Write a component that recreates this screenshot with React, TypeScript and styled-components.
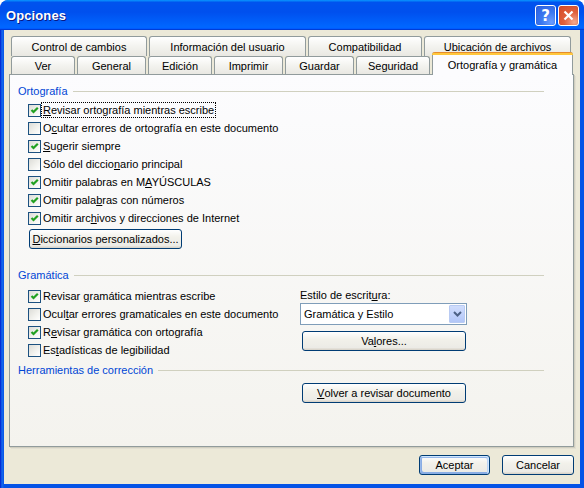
import React from 'react'
import styled, { createGlobalStyle } from 'styled-components'

const GlobalStyle = createGlobalStyle`
  html, body {
    margin: 0;
    padding: 0;
    background: #ffffff;
  }
  body {
    font-family: "Liberation Sans", Arial, sans-serif;
    font-size: 11px;
    color: #000000;
  }
  * {
    box-sizing: border-box;
  }
`

const Key = styled.span`
  text-decoration: underline;
  text-underline-offset: 1px;
`

type CheckItem = {
  label: React.ReactNode
  checked: boolean
  focused?: boolean
}

const topTabs = [
  { label: 'Control de cambios', width: 136 },
  { label: 'Información del usuario', width: 157 },
  { label: 'Compatibilidad', width: 114 },
  { label: 'Ubicación de archivos', width: 147 },
]

const bottomTabs = [
  { label: 'Ver', width: 64 },
  { label: 'General', width: 69 },
  { label: 'Edición', width: 64 },
  { label: 'Imprimir', width: 69 },
  { label: 'Guardar', width: 69 },
  { label: 'Seguridad', width: 74 },
]

function CheckBox({ checked }: { checked: boolean }) {
  return (
    <Box>
      {checked && (
        <svg width="11" height="11" viewBox="0 0 11 11">
          <path d="M2.5 5 L4.5 7 L8.8 2.7" fill="none" stroke="#21A121" strokeWidth="2.2" />
        </svg>
      )}
    </Box>
  )
}

function CheckRows({ items, $flush }: { items: CheckItem[]; $flush?: boolean }) {
  return (
    <CheckList $flush={$flush}>
      {items.map((item, i) => (
        <CheckRow key={i}>
          <CheckBox checked={item.checked} />
          <CheckLabel $focused={item.focused}>{item.label}</CheckLabel>
        </CheckRow>
      ))}
    </CheckList>
  )
}

function App() {
  const spelling: CheckItem[] = [
    { label: <><Key>R</Key>evisar ortografía mientras escribe</>, checked: true, focused: true },
    { label: <>O<Key>c</Key>ultar errores de ortografía en este documento</>, checked: false },
    { label: <><Key>S</Key>ugerir siempre</>, checked: true },
    { label: <>Sólo del diccio<Key>n</Key>ario principal</>, checked: false },
    { label: <>Omitir palabras en M<Key>A</Key>YÚSCULAS</>, checked: true },
    { label: <>Omitir pala<Key>b</Key>ras con números</>, checked: true },
    { label: <>Omitir arc<Key>h</Key>ivos y direcciones de Internet</>, checked: true },
  ]

  const grammar: CheckItem[] = [
    { label: <>Revisar <Key>g</Key>ramática mientras escribe</>, checked: true },
    { label: <>Ocul<Key>t</Key>ar errores gramaticales en este documento</>, checked: false },
    { label: <>R<Key>e</Key>visar gramática con ortografía</>, checked: true },
    { label: <>Es<Key>t</Key>adísticas de legibilidad</>, checked: false },
  ]

  return (
    <>
      <GlobalStyle />
      <Window>
        <TitleBar>
          <TitleText>Opciones</TitleText>
          <CaptionButton $kind="help">?</CaptionButton>
          <CaptionButton $kind="close">
            <svg width="11" height="11" viewBox="0 0 11 11">
              <path d="M1.5 1.5 L9.5 9.5 M9.5 1.5 L1.5 9.5" stroke="#ffffff" strokeWidth="2.2" />
            </svg>
          </CaptionButton>
        </TitleBar>

        <Body>
          <TabStrip>
            <TabRow $height={20}>
              {topTabs.map((t) => (
                <Tab key={t.label} $width={t.width}>
                  {t.label}
                </Tab>
              ))}
            </TabRow>
            <TabRow $height={18}>
              {bottomTabs.map((t) => (
                <Tab key={t.label} $width={t.width}>
                  {t.label}
                </Tab>
              ))}
              <ActiveTab>Ortografía y gramática</ActiveTab>
            </TabRow>
          </TabStrip>

          <Panel>
            <GroupHeader>
              Ortografía
              <Rule />
            </GroupHeader>
            <Indented>
              <CheckRows items={spelling} />
              <PushButton $width={153} $offset={1} $gap={2}>
                <Key>D</Key>iccionarios personalizados...
              </PushButton>
            </Indented>

            <GroupHeader $spaceAbove={19}>
              Gramática
              <Rule />
            </GroupHeader>
            <TwoCol $spaceAbove={5}>
              <Indented>
                <CheckRows items={grammar} $flush />
              </Indented>
              <SideColumn>
                <FieldLabel>
                  Estilo de escrit<Key>u</Key>ra:
                </FieldLabel>
                <Select>
                  <SelectValue>Gramática y Estilo</SelectValue>
                  <SelectArrow>
                    <svg width="9" height="6" viewBox="0 0 9 6">
                      <path d="M1 1 L4.5 4.5 L8 1" fill="none" stroke="#4D6185" strokeWidth="2" />
                    </svg>
                  </SelectArrow>
                </Select>
                <PushButton $width={164} $offset={2} $gap={6}>
                  Va<Key>l</Key>ores...
                </PushButton>
              </SideColumn>
            </TwoCol>

            <GroupHeader $spaceAbove={4}>
              Herramientas de corrección
              <Rule />
            </GroupHeader>
            <TwoCol $spaceAbove={6}>
              <span />
              <PushButton $width={164} $offset={2}>
                <Key>V</Key>olver a revisar documento
              </PushButton>
            </TwoCol>
          </Panel>

          <Footer>
            <PushButton $width={71} $default>
              Aceptar
            </PushButton>
            <PushButton $width={72}>Cancelar</PushButton>
          </Footer>
        </Body>
      </Window>
    </>
  )
}

export default App

const Window = styled.div`
  width: 584px;
  height: 488px;
  display: flex;
  flex-direction: column;
  background: linear-gradient(90deg, #0019cf 0, #0842dc 1px, #166aee 2px, #0553e6 4px);
  border-radius: 8px 8px 0 0;
  overflow: hidden;
`

const TitleBar = styled.div`
  height: 30px;
  flex: none;
  display: flex;
  align-items: center;
  gap: 2px;
  padding: 0 5px 0 6px;
  background: linear-gradient(
    180deg,
    #0997ff,
    #0053ee 8%,
    #0050ee 40%,
    #0066ff 88%,
    #0066ff 93%,
    #005bff 95%,
    #003dd7 96%,
    #003dd7
  );
  border-radius: 8px 8px 0 0;
`

const TitleText = styled.div`
  flex: 1;
  color: #ffffff;
  font-family: "Liberation Sans", Arial, sans-serif;
  font-weight: 700;
  font-size: 13px;
  letter-spacing: 0.1px;
  text-shadow: 1px 1px 0 #0a1883;
  padding-top: 1px;
`

const CaptionButton = styled.div<{ $kind: 'help' | 'close' }>`
  width: 21px;
  height: 21px;
  border: 1px solid #ffffff;
  border-radius: 3px;
  display: flex;
  align-items: center;
  justify-content: center;
  color: #ffffff;
  font-family: "DejaVu Sans", sans-serif;
  font-weight: 700;
  font-size: 15px;
  margin-top: 1px;
  background: ${(p) =>
    p.$kind === 'help'
      ? 'radial-gradient(circle at 80% 85%, #6a9cff 0%, #3a78f0 45%, #2a5ee0 100%)'
      : 'radial-gradient(circle at 80% 85%, #f4a88e 0%, #e0603c 45%, #d44a26 100%)'};
  box-shadow: inset 0 0 1px rgba(0, 0, 0, 0.3);
`

const Body = styled.div`
  flex: 1;
  display: flex;
  flex-direction: column;
  margin: 0 4px 4px;
  padding: 6px 6px 0 5px;
  background: #ece9d8;
`

const TabStrip = styled.div`
  display: flex;
  flex-direction: column;
  padding-left: 2px;
`

const TabRow = styled.div<{ $height: number }>`
  display: flex;
  align-items: flex-end;
  gap: 2px;
  height: ${(p) => p.$height}px;
`

const Tab = styled.div<{ $width: number }>`
  width: ${(p) => p.$width}px;
  height: 100%;
  flex: none;
  display: flex;
  align-items: center;
  justify-content: center;
  border: 1px solid #919b9c;
  border-bottom: none;
  border-radius: 3px 3px 0 0;
  background: linear-gradient(180deg, #ffffff 0%, #f3f3ef 50%, #e9e8e2 100%);
  white-space: nowrap;
  padding-top: 1px;
`

const ActiveTab = styled.div`
  position: relative;
  z-index: 2;
  width: 141px;
  height: 23px;
  flex: none;
  margin-bottom: -1px;
  display: flex;
  align-items: center;
  justify-content: center;
  border: 1px solid #919b9c;
  border-top: none;
  border-bottom: none;
  border-radius: 3px 3px 0 0;
  background: #fcfcfe;
  white-space: nowrap;
  padding-top: 2px;

  &::before {
    content: '';
    position: absolute;
    top: 0;
    left: -1px;
    right: -1px;
    height: 3px;
    border-radius: 3px 3px 0 0;
    background: linear-gradient(180deg, #e68b2c 0 1px, #ffc73c 1px 3px);
  }
`

const Panel = styled.div`
  height: 373px;
  flex: none;
  border: 1px solid #919b9c;
  box-shadow: 1px 1px 0 #d0cebf, 2px 2px 0 #e2dfd2;
  background: linear-gradient(180deg, #fcfcfe 0%, #f4f3ee 100%);
  padding: 9px 29px 0 8px;
  display: flex;
  flex-direction: column;
`

const GroupHeader = styled.div<{ $spaceAbove?: number }>`
  display: flex;
  align-items: center;
  gap: 5px;
  height: 14px;
  margin-top: ${(p) => p.$spaceAbove ?? 0}px;
  color: #0046d5;
  white-space: nowrap;
`

const Rule = styled.div`
  flex: 1;
  height: 1px;
  background: #d0d0bf;
`

const Indented = styled.div`
  display: flex;
  flex-direction: column;
  align-items: flex-start;
  padding-left: 10px;
`

const CheckList = styled.div<{ $flush?: boolean }>`
  display: flex;
  flex-direction: column;
  margin-top: ${(p) => (p.$flush ? 0 : 3)}px;
`

const CheckRow = styled.div`
  display: flex;
  align-items: center;
  height: 18px;
`

const Box = styled.div`
  width: 13px;
  height: 13px;
  flex: none;
  border: 1px solid #1c5180;
  background: linear-gradient(135deg, #dcdcd7 0%, #f3f3ef 60%, #ffffff 100%);
  display: flex;
  align-items: center;
  justify-content: center;
`

const CheckLabel = styled.span<{ $focused?: boolean }>`
  border: 1px ${(p) => (p.$focused ? 'dotted #000000' : 'solid transparent')};
  padding: 0 1px;
  line-height: 14px;
  white-space: nowrap;
`

const TwoCol = styled.div<{ $spaceAbove?: number }>`
  display: grid;
  grid-template-columns: 282px 167px;
  margin-top: ${(p) => p.$spaceAbove ?? 0}px;
`

const SideColumn = styled.div`
  display: flex;
  flex-direction: column;
  align-items: flex-start;
`

const FieldLabel = styled.div`
  line-height: 14px;
  margin-top: 1px;
  white-space: nowrap;
`

const Select = styled.div`
  width: 167px;
  height: 22px;
  margin-top: 1px;
  border: 1px solid #7f9db9;
  background: #ffffff;
  display: flex;
  align-items: center;
  padding: 1px;
`

const SelectValue = styled.span`
  flex: 1;
  padding-left: 2px;
`

const SelectArrow = styled.div`
  width: 16px;
  height: 18px;
  display: flex;
  align-items: center;
  justify-content: center;
  border: 1px solid #b9cbf3;
  border-radius: 1px;
  background: linear-gradient(180deg, #d0ddfc 0%, #bfd0fb 60%, #b2c6f7 100%);
`

const PushButton = styled.div<{ $width: number; $offset?: number; $gap?: number; $default?: boolean }>`
  width: ${(p) => p.$width}px;
  height: 20px;
  flex: none;
  margin-left: ${(p) => p.$offset ?? 0}px;
  margin-top: ${(p) => p.$gap ?? 0}px;
  display: flex;
  align-items: center;
  justify-content: center;
  border: 1px solid #003c74;
  border-radius: 3px;
  background: linear-gradient(180deg, #ffffff 0%, #f2f1ea 40%, #ecebe6 86%, #d6d0c5 100%);
  white-space: nowrap;
  box-shadow: ${(p) =>
    p.$default
      ? 'inset -1px 1px #cee7ff, inset 1px 2px #98b8ea, inset -2px 2px #bcd4f6, inset 1px -1px #89ade4, inset 2px -2px #89ade4'
      : 'none'};
`

const Footer = styled.div`
  display: flex;
  justify-content: flex-end;
  gap: 12px;
  padding-top: 8px;
`
